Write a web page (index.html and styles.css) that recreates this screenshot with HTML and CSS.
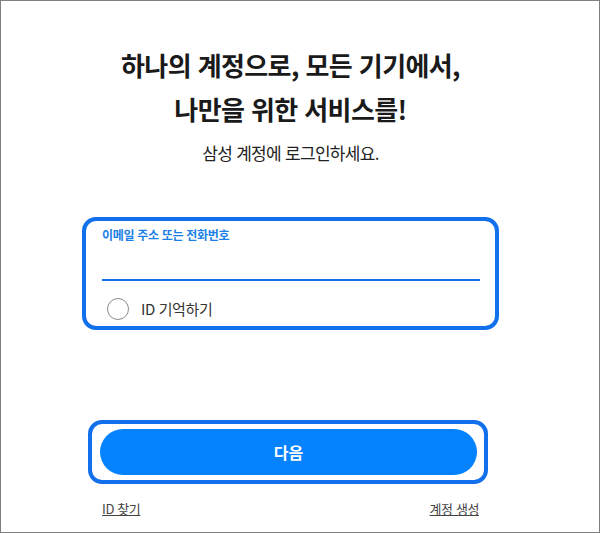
FILE: index.html
```html
<!DOCTYPE html>
<html lang="ko">
<head>
<meta charset="utf-8">
<title>삼성 계정</title>
<link rel="stylesheet" href="styles.css">
</head>
<body>
<div class="page">
  <div class="column">
    <h1 class="title">하나의 계정으로, 모든 기기에서,<br>나만을 위한 서비스를!</h1>
    <p class="subtitle">삼성 계정에 로그인하세요.</p>

    <div class="card">
      <label class="field-label" for="email">이메일 주소 또는 전화번호</label>
      <input class="field-input" id="email" type="text">
      <div class="remember">
        <span class="radio"></span>
        <span class="remember-text">ID 기억하기</span>
      </div>
    </div>

    <div class="btn-ring">
      <button class="btn-next" type="button">다음</button>
    </div>

    <div class="links">
      <a class="link" href="#">ID 찾기</a>
      <a class="link" href="#">계정 생성</a>
    </div>
  </div>
</div>
</body>
</html>
```

FILE: styles.css
```css
html, body {
  margin: 0;
  padding: 0;
  background: #ffffff;
}

body {
  font-family: "Noto Sans CJK KR", "Noto Sans", sans-serif;
  color: #1e1e1e;
}

.page {
  width: 600px;
  height: 533px;
  box-sizing: border-box;
  border: 1px solid #808080;
  padding-right: 19px;
  overflow: hidden;
}

.column {
  width: 417px;
  margin: 0 auto;
  display: flex;
  flex-direction: column;
}

.title {
  margin: 42px -60px 0;
  font-size: 26px;
  line-height: 44px;
  font-weight: 700;
  letter-spacing: -0.6px;
  text-align: center;
  color: #1a1a1a;
}

.subtitle {
  margin: 10px -40px 0;
  font-size: 17px;
  line-height: 24px;
  letter-spacing: -0.7px;
  text-align: center;
  color: #222222;
}

.card {
  margin-top: 52px;
  border: 4px solid #1270ec;
  border-radius: 14px;
  padding: 6px 15px 6px 16px;
  display: flex;
  flex-direction: column;
}

.field-label {
  font-size: 12px;
  line-height: 16px;
  font-weight: 700;
  letter-spacing: -0.3px;
  color: #1a7fe6;
}

.field-input {
  height: 38px;
  border: 0;
  border-bottom: 2px solid #1470e6;
  padding: 0;
  margin: 0;
  outline: none;
  background: transparent;
  font: inherit;
  box-sizing: border-box;
}

.remember {
  margin-top: 17px;
  padding-left: 5px;
  display: flex;
  align-items: center;
  gap: 12px;
  height: 22px;
}

.radio {
  width: 22px;
  height: 22px;
  box-sizing: border-box;
  border: 1.5px solid #8a8a8a;
  border-radius: 50%;
}

.remember-text {
  font-size: 15px;
  line-height: 22px;
  letter-spacing: -0.4px;
  color: #333333;
}

.btn-ring {
  margin-top: 90px;
  margin-left: 6px;
  width: 400px;
  box-sizing: border-box;
  border: 4px solid #1270ec;
  border-radius: 14px;
  padding: 5px 7px 5px 8px;
}

.btn-next {
  display: block;
  width: 100%;
  height: 46px;
  border: 0;
  border-radius: 23px;
  background: #0582fe;
  color: #ffffff;
  font-family: "Noto Sans CJK KR", "Noto Sans", sans-serif;
  font-size: 16px;
  font-weight: 700;
  cursor: pointer;
}

.links {
  margin-top: 15px;
  padding: 0 20px;
  display: flex;
  justify-content: space-between;
}

.link {
  font-size: 13px;
  line-height: 20px;
  letter-spacing: -0.4px;
  color: #444444;
  text-decoration: underline;
}
```
